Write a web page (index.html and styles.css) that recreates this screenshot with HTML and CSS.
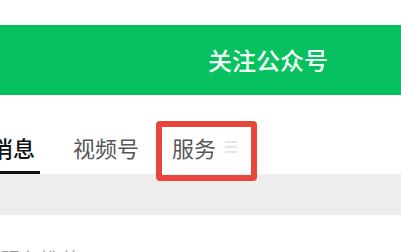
FILE: index.html
```html
<!DOCTYPE html>
<html lang="zh">
<head>
<meta charset="utf-8">
<link rel="stylesheet" href="styles.css">
</head>
<body>
<div class="page">
  <div class="topbar"></div>
  <div class="banner"><span class="follow">关注公众号</span></div>
  <div class="tabs">
    <div class="tab active"><span class="label">消息</span><span class="line"></span></div>
    <div class="tab"><span class="label">视频号</span></div>
    <div class="tab"><span class="label">服务<svg class="menu" width="12" height="14" viewBox="0 0 12 14"><path d="M0 2h12M0 7h12M0 12h12" stroke="#dcdce6" stroke-width="1.4" fill="none"/></svg></span></div>
  </div>
  <div class="band"></div>
  <div class="list"><span class="item">服务推荐</span></div>
  <div class="highlight"></div>
</div>
</body>
</html>
```
FILE: styles.css
```css
html, body {
  margin: 0;
  padding: 0;
  background: #fff;
}
.page {
  position: relative;
  width: 401px;
  height: 252px;
  overflow: hidden;
  font-family: "Noto Sans CJK SC", "Noto Sans", sans-serif;
}
.topbar {
  height: 25px;
  background: #fff;
}
.banner {
  height: 70px;
  background: #07c160;
  display: flex;
  align-items: center;
  justify-content: flex-end;
  padding-right: 73px;
}
.follow {
  color: #f4fff8;
  font-size: 24px;
  font-weight: 500;
  line-height: 24px;
}
.tabs {
  height: 79px;
  display: flex;
  gap: 33px;
  padding-top: 41px;
  box-sizing: border-box;
  margin-left: -9px;
}
.tab {
  display: flex;
  flex-direction: column;
  align-items: flex-start;
}
.label {
  display: flex;
  align-items: center;
  font-size: 22px;
  line-height: 22px;
  color: #575757;
}
.tab.active .label {
  color: #111;
  font-weight: 500;
}
.line {
  margin-top: 13px;
  width: 49px;
  height: 3px;
  background: #111;
}
.menu {
  margin-left: 9px;
}
.band {
  height: 41px;
  background: #ededed;
}
.list {
  padding-top: 34px;
}
.item {
  font-size: 20px;
  line-height: 20px;
  color: #9a9a9a;
}
.highlight {
  position: absolute;
  left: 156px;
  top: 121px;
  width: 101px;
  height: 60px;
  box-sizing: border-box;
  border: 6px solid #e8453c;
  border-radius: 4px;
}
```
